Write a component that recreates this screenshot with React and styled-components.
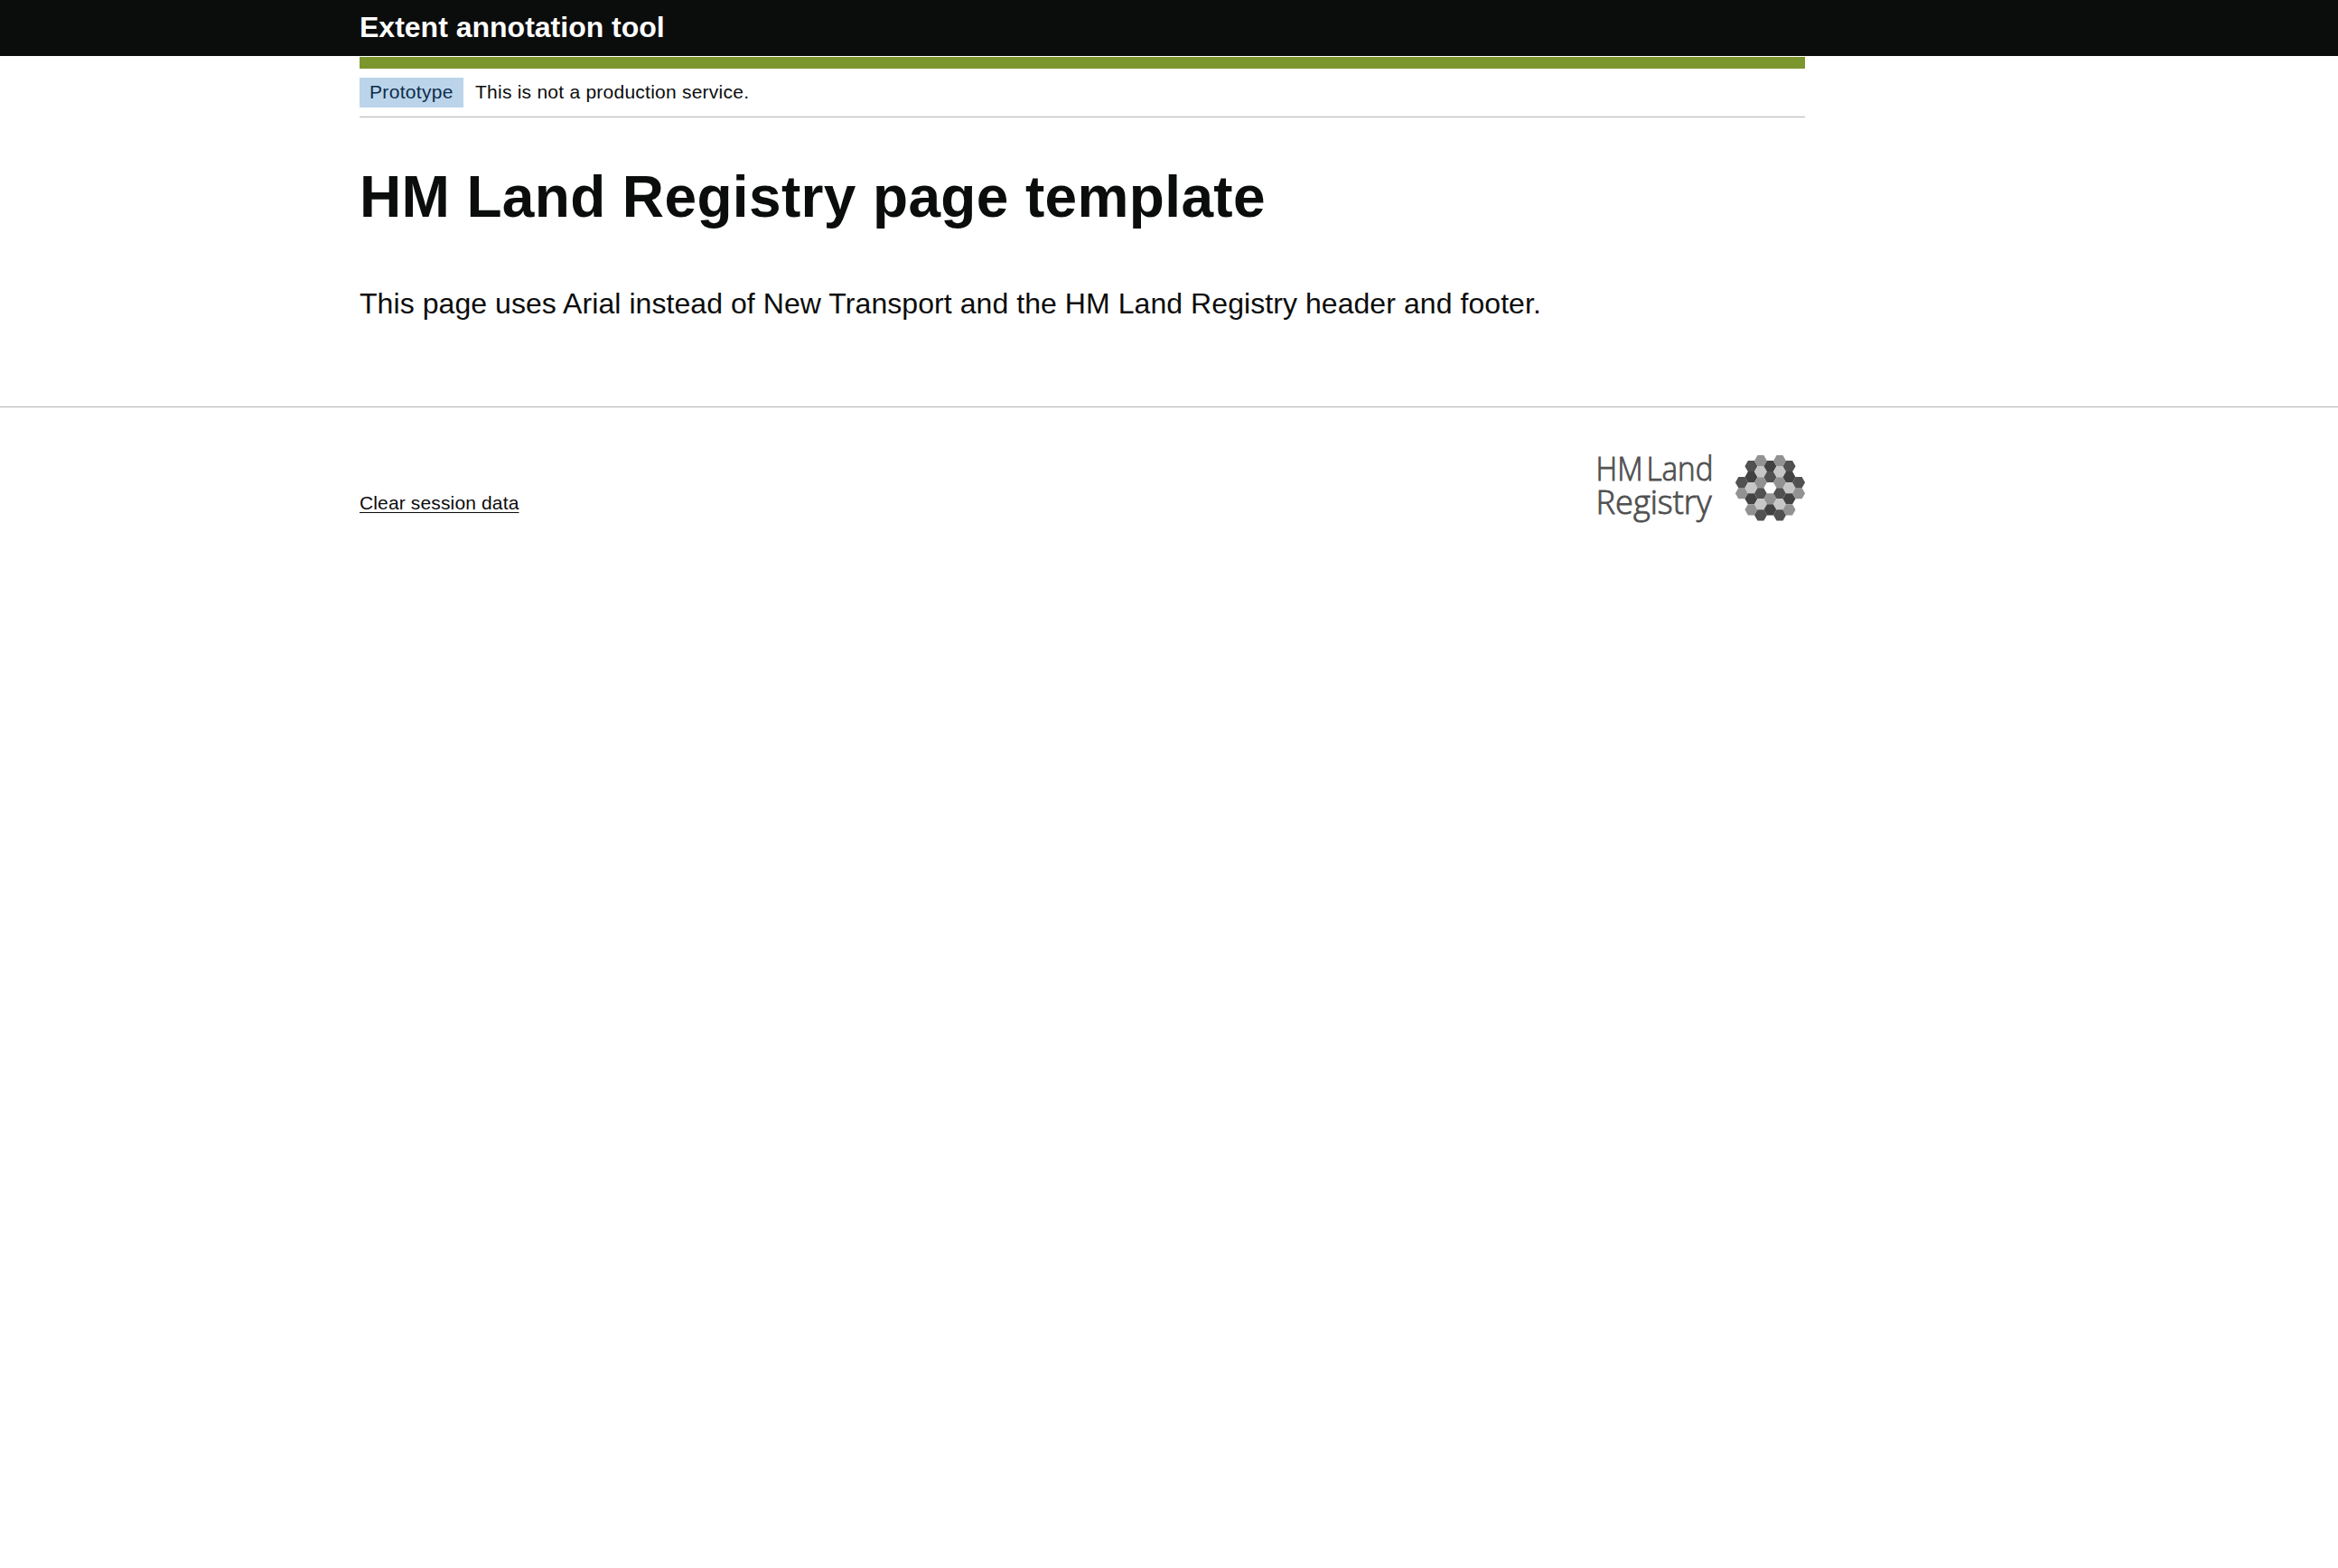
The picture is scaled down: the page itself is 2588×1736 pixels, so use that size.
import React from "react";
import styled, { createGlobalStyle } from "styled-components";

const GlobalStyle = createGlobalStyle`
  body {
    margin: 0;
    background: #fff;
    color: #0b0c0c;
    font-family: "Liberation Sans", Arial, Helvetica, sans-serif;
    -webkit-font-smoothing: antialiased;
  }
`;

const Container = styled.div`
  box-sizing: border-box;
  width: 1600px;
  margin-left: 398px;
`;

const Header = styled.header`
  background: #0b0c0c;
  height: 62px;
`;

const HeaderTitle = styled.a`
  display: block;
  padding-top: 12px;
  color: #fff;
  font-size: 32px;
  line-height: 37px;
  font-weight: 700;
  text-decoration: none;
  white-space: nowrap;
`;

const AccentBar = styled.div`
  height: 13px;
  margin-top: 1px;
  background: #7b962c;
`;

const PhaseBanner = styled.div`
  box-sizing: border-box;
  display: flex;
  align-items: flex-start;
  gap: 13px;
  height: 54px;
  padding-top: 10px;
  border-bottom: 1px solid #b1b4b6;
  font-size: 21px;
  line-height: 32px;
  letter-spacing: 0.24px;
  white-space: nowrap;
`;

const PhaseTag = styled.strong`
  box-sizing: border-box;
  width: 115px;
  height: 33px;
  padding-left: 11px;
  background: #bbd4ea;
  color: #0c2d4a;
  font-weight: 400;
  letter-spacing: 0.32px;
`;

const Main = styled.main`
  height: 320px;
  box-sizing: border-box;
  padding-top: 53px;
`;

const Heading = styled.h1`
  margin: 0;
  font-size: 64px;
  line-height: 70px;
  font-weight: 700;
  letter-spacing: 0.36px;
  white-space: nowrap;
`;

const Paragraph = styled.p`
  margin: 62px 0 0;
  font-size: 32px;
  line-height: 42px;
  letter-spacing: 0.065px;
  white-space: nowrap;
`;

const Footer = styled.footer`
  border-top: 1px solid #b1b4b6;
`;

const FooterRow = styled.div`
  display: flex;
  justify-content: space-between;
  align-items: flex-start;
  padding-top: 35px;
`;

const FooterLink = styled.a`
  margin-top: 59px;
  color: #0b0c0c;
  font-size: 21px;
  line-height: 24px;
  letter-spacing: 0.14px;
  text-decoration: underline;
  text-decoration-thickness: 1px;
  text-underline-offset: 3px;
  text-decoration-skip-ink: none;
  white-space: nowrap;
`;

const LogoSvg = styled.svg`
  display: block;
  width: 236px;
  height: 100px;
  overflow: visible;
`;

const LogoText = styled.text`
  font-family: "Open Sans", "Noto Sans", sans-serif;
  font-size: 36.5px;
  font-weight: 300;
  fill: #505050;
  stroke: #505050;
  stroke-width: 0.9px;
`;

const SHADES = { k: "#424242", d: "#515151", m: "#929292", l: "#c6c6c6", w: "#ffffff" };
const COLUMNS = [
  { top: 534.2, shades: "dm" },
  { top: 516.2, shades: "dklkm" },
  { top: 510.2, shades: "mlmdld" },
  { top: 516.2, shades: "kdwmk" },
  { top: 510.2, shades: "mlmdld" },
  { top: 516.2, shades: "dklkm" },
  { top: 534.2, shades: "dm" },
];

const hexagon = (x, y) =>
  [[-7, 0], [-3.5, -6.1], [3.5, -6.1], [7, 0], [3.5, 6.1], [-3.5, 6.1]]
    .map(([dx, dy]) => `${x + dx},${y + dy}`)
    .join(" ");

function Logo() {
  return (
    <LogoSvg viewBox="1762 486 236 100" role="img" aria-label="HM Land Registry">
      <LogoText x="1766.5" y="531.5" textLength="52" lengthAdjust="spacingAndGlyphs">HM</LogoText>
      <LogoText x="1822.5" y="531.5" textLength="74" lengthAdjust="spacingAndGlyphs">Land</LogoText>
      <LogoText x="1766.5" y="569" textLength="128" lengthAdjust="spacingAndGlyphs">Registry</LogoText>
      {COLUMNS.map((column, c) =>
        [...column.shades].map((shade, r) => (
          <polygon
            key={`${c}-${r}`}
            points={hexagon(1927.9 + c * 10.53, column.top + r * 12.02)}
            fill={SHADES[shade]}
          />
        ))
      )}
    </LogoSvg>
  );
}

export default function App() {
  return (
    <>
      <GlobalStyle />
      <Header>
        <Container>
          <HeaderTitle>Extent annotation tool</HeaderTitle>
        </Container>
      </Header>
      <Container>
        <AccentBar />
        <PhaseBanner>
          <PhaseTag>Prototype</PhaseTag>
          <span>This is not a production service.</span>
        </PhaseBanner>
        <Main>
          <Heading>HM Land Registry page template</Heading>
          <Paragraph>This page uses Arial instead of New Transport and the HM Land Registry header and footer.</Paragraph>
        </Main>
      </Container>
      <Footer>
        <Container>
          <FooterRow>
            <FooterLink>Clear session data</FooterLink>
            <Logo />
          </FooterRow>
        </Container>
      </Footer>
    </>
  );
}
